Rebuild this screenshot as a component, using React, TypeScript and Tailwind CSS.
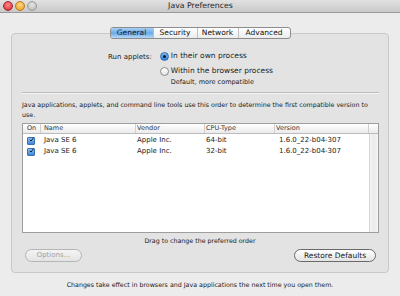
import React from "react";

const rows = [
  { name: "Java SE 6", vendor: "Apple Inc.", cpu: "64-bit", version: "1.6.0_22-b04-307" },
  { name: "Java SE 6", vendor: "Apple Inc.", cpu: "32-bit", version: "1.6.0_22-b04-307" },
];

const Check = () => (
  <span className="w-[8px] h-[8px] rounded-[1px] border border-[#3a6fb0] bg-gradient-to-b from-[#8fc0f0] to-[#3f86d6] flex items-center justify-center">
    <svg viewBox="0 0 10 10" className="w-[9px] h-[9px] -mt-[2px] ml-[1px]">
      <path d="M1.5 5.5 L4 8 L9.5 1" stroke="#0c1f40" strokeWidth="2" fill="none" />
    </svg>
  </span>
);

const Radio = ({ on }: { on?: boolean }) =>
  on ? (
    <span className="w-[9px] h-[9px] rounded-full border border-[#2f6db5] bg-gradient-to-b from-[#7fb6ee] to-[#2f7fd4] flex items-center justify-center">
      <span className="w-[3px] h-[3px] rounded-full bg-[#0d1a2e]" />
    </span>
  ) : (
    <span className="w-[9px] h-[9px] rounded-full border border-[#8a8a8a] bg-gradient-to-b from-[#ffffff] to-[#e4e4e4]" />
  );

export default function App() {
  return (
    <div className="w-[400px] h-[296px] bg-[#ececec] text-[#1a1a1a] font-['DejaVu_Sans',sans-serif] text-[7px] overflow-hidden">
      {/* title bar */}
      <div className="h-[13px] bg-gradient-to-b from-[#e2e2e2] to-[#c9c9c9] border-b border-[#9a9a9a] flex items-center relative">
        <div className="flex gap-[2px] pl-[3px]">
          <span className="w-[10px] h-[10px] rounded-full bg-[radial-gradient(circle_at_50%_35%,#ff8a8a,#d2232b)] border border-[#a4252a]" />
          <span className="w-[10px] h-[10px] rounded-full bg-[radial-gradient(circle_at_50%_35%,#ffd98a,#e59a16)] border border-[#b9791a]" />
          <span className="w-[10px] h-[10px] rounded-full bg-[radial-gradient(circle_at_50%_35%,#e6e6e6,#b3b3b3)] border border-[#9a9a9a]" />
        </div>
        <div className="flex-1 text-center text-[7.8px] text-[#222] -ml-[36px]">Java Preferences</div>
      </div>

      <div className="pt-[14px] flex flex-col">
        {/* tabs */}
        <div className="relative z-10 flex justify-center -mb-[6px]">
          <div className="flex h-[12px] rounded-[3px] border border-[#8c8c8c] overflow-hidden bg-gradient-to-b from-[#ffffff] to-[#ececec] text-[7.5px] text-[#111]">
            <div className="w-[42px] flex items-center justify-center bg-gradient-to-b from-[#a9d0f5] via-[#6aa9e8] to-[#b5d8f8] text-[#0b1a33]">General</div>
            <div className="w-[44px] flex items-center justify-center border-l border-[#c0c0c0]">Security</div>
            <div className="w-[41px] flex items-center justify-center border-l border-[#c0c0c0]">Network</div>
            <div className="w-[52px] flex items-center justify-center border-l border-[#c0c0c0]">Advanced</div>
          </div>
        </div>

        {/* group box */}
        <div className="mx-[11px] h-[240px] rounded-[4px] border border-[#c9c9c9] bg-[#e3e3e3] flex flex-col">
          <div className="pt-[16px] pl-[96px] flex gap-[8px]">
            <div className="pt-[2px]">Run applets:</div>
            <div className="flex flex-col">
              <div className="flex items-center gap-[2px] h-[12px]">
                <Radio on />
                <span className="text-[7.5px]">In their own process</span>
              </div>
              <div className="flex items-center gap-[2px] h-[12px] mt-[3px]">
                <Radio />
                <span className="text-[7.5px]">Within the browser process</span>
              </div>
              <div className="pl-[11px] text-[6.5px] leading-[9px] mt-[1px]">Default, more compatible</div>
            </div>
          </div>

          <div className="mx-[10px] mr-[9px] mt-[5px] h-[2px] border-t border-[#bdbdbd] border-b border-b-[#f4f4f4]" />

          <div className="mx-[10px] mt-[6px] leading-[10px] text-[6.3px]">
            Java applications, applets, and command line tools use this order to determine the first compatible version to use.
          </div>

          {/* table */}
          <div className="mx-[10px] mr-[9px] mt-[3px] h-[110px] border border-[#9e9e9e] bg-white flex flex-col">
            <div className="h-[10px] flex bg-gradient-to-b from-[#ffffff] to-[#ebebeb] border-b border-[#bcbcbc] text-[6.5px] text-[#333]">
              <div className="w-[18px] pl-[4px] flex items-center border-r border-[#cfcfcf]">On</div>
              <div className="w-[95px] pl-[3px] flex items-center border-r border-[#cfcfcf]">Name</div>
              <div className="w-[69px] pl-[1px] flex items-center border-r border-[#cfcfcf]">Vendor</div>
              <div className="w-[70px] pl-[1px] flex items-center border-r border-[#cfcfcf]">CPU-Type</div>
              <div className="w-[94px] pl-[1px] flex items-center border-r border-[#cfcfcf]">Version</div>
              <div className="flex-1" />
            </div>
            <div className="flex-1 flex">
              <div className="flex-1 flex flex-col pt-[1px]">
                {rows.map((r, i) => (
                  <div key={i} className="h-[11px] flex items-center text-[7px]">
                    <div className="w-[18px] pl-[4px] flex items-center"><Check /></div>
                    <div className="w-[95px] pl-[3px]">{r.name}</div>
                    <div className="w-[69px] pl-[1px]">{r.vendor}</div>
                    <div className="w-[70px] pl-[1px]">{r.cpu}</div>
                    <div className="w-[94px] pl-[4px]">{r.version}</div>
                  </div>
                ))}
              </div>
              <div className="w-[9px] bg-gradient-to-r from-[#f4f4f4] via-[#e9e9e9] to-[#f7f7f7] border-l border-[#d6d6d6]" />
            </div>
          </div>

          <div className="text-center mt-[4px] leading-[8px] text-[6.3px]">Drag to change the preferred order</div>

          <div className="flex justify-between mt-[4px] mx-[13px] mr-[12px]">
            <div className="w-[57px] h-[13px] rounded-full border border-[#b5b5b5] bg-gradient-to-b from-[#f4f4f4] to-[#e4e4e4] flex items-center justify-center text-[#a0a0a0] text-[7px]">Options...</div>
            <div className="w-[82px] h-[13px] rounded-full border border-[#6a6a6a] bg-gradient-to-b from-[#ffffff] to-[#e3e3e3] flex items-center justify-center text-[7.5px]">Restore Defaults</div>
          </div>
        </div>

        <div className="text-center mt-[8px] leading-[8px] text-[6.3px]">Changes take effect in browsers and Java applications the next time you open them.</div>
      </div>
    </div>
  );
}
